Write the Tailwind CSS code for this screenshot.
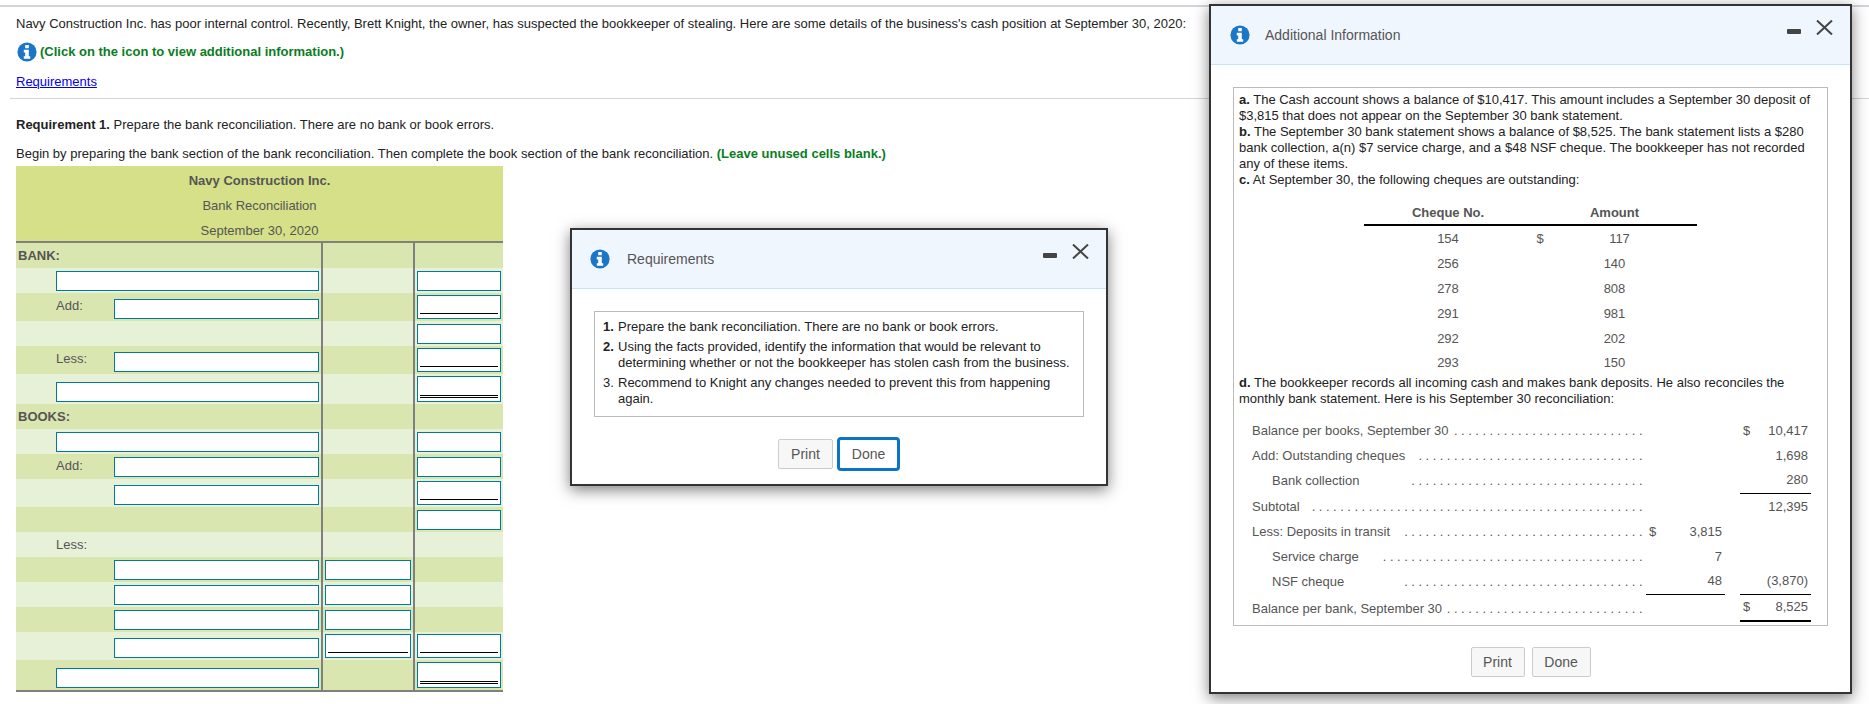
<!DOCTYPE html>
<html lang="en">
<head>
    <meta charset="UTF-8">
    <title>Bank Reconciliation</title>
    <script src="https://cdn.jsdelivr.net/npm/@tailwindcss/browser@4"></script>
</head>
<body class="relative h-[704px] overflow-hidden bg-white font-['Liberation_Sans',Arial,sans-serif] text-[13px] text-[#222]">

    <!-- Question -->
    <div class="border-t-2 border-[#d3d3dc] mt-[5px]"></div>
    <p class="pl-4 pt-[9px] h-[32px] leading-[16px]">Navy Construction Inc. has poor internal control. Recently, Brett Knight, the owner, has suspected the bookkeeper of stealing. Here are some details of the business's cash position at September 30, 2020:</p>
    <div class="pl-[17px] flex items-center h-[26px] gap-[3px]">
        <svg class="w-[20px] h-[20px]" viewBox="0 0 20 20"><circle cx="10" cy="10" r="9.6" fill="#1976c8"/><path fill="#fff" d="M8.2 3h3.6v3.2H8.2zM6.8 7.8h5v6.4h1.4v2.6H6.8v-2.6h1.4v-3.8H6.8z"/></svg>
        <span class="font-bold text-[#0a7d1e]">(Click on the icon to view additional information.)</span>
    </div>
    <div class="pl-4 pt-[7px] h-[33px]"><a href="#" class="text-[#0000ee] underline">Requirements</a></div>
    <div class="ml-[10px] border-t border-[#d3d3dc]"></div>
    <p class="pl-4 pt-[18px] h-[43px] leading-[16px]"><b>Requirement 1.</b> Prepare the bank reconciliation. There are no bank or book errors.</p>
    <p class="pl-4 pt-[4px] h-[24px] leading-[16px]">Begin by preparing the bank section of the bank reconciliation. Then complete the book section of the bank reconciliation. <b class="text-[#0a7d1e]">(Leave unused cells blank.)</b></p>

    <!-- Worksheet -->
    <div class="ml-4 w-[487px] text-[#555]">
        <div class="bg-[#d5e088] h-[75px] text-center flex flex-col pt-[2px] border-b-0">
            <div class="h-[25px] leading-[25px] font-bold">Navy Construction Inc.</div>
            <div class="h-[25px] leading-[25px]">Bank Reconciliation</div>
            <div class="h-[25px] leading-[25px]">September 30, 2020</div>
        </div>
        <div class="border-t-2 border-b-2 border-[#808080]">
            <div class="flex h-[25px] bg-[#dae6b0]">
                <div class="w-[305px] pl-[2px] flex items-center font-bold">BANK:</div>
                <div class="w-[94px] border-x-2 border-[#808080]"></div>
                <div class="flex-1"></div>
            </div>
            <div class="flex h-[25px] bg-[#e7f1d8]">
                <div class="w-[305px] pl-10 pr-[2px] flex items-end pb-[2px]"><input class="w-full h-[20px] bg-white border border-[#007a9c]"></div>
                <div class="w-[94px] border-x-2 border-[#808080]"></div>
                <div class="flex-1 px-[2px] flex items-end pb-[2px]"><input class="w-full h-[20px] bg-white border border-[#007a9c]"></div>
            </div>
            <div class="flex h-[28px] bg-[#dae6b0]">
                <div class="w-[305px] pl-10 pr-[2px] flex items-end pb-[2px]"><span class="w-[58px] self-center">Add:</span><input class="flex-1 h-[20px] bg-white border border-[#007a9c]"></div>
                <div class="w-[94px] border-x-2 border-[#808080]"></div>
                <div class="flex-1 px-[2px] flex items-end pb-[2px]"><div class="w-full h-[24px] bg-white border border-[#007a9c] px-[2px]"><div class="h-[18px] border-b border-black"></div></div></div>
            </div>
            <div class="flex h-[25px] bg-[#e7f1d8]">
                <div class="w-[305px]"></div>
                <div class="w-[94px] border-x-2 border-[#808080]"></div>
                <div class="flex-1 px-[2px] flex items-end pb-[2px]"><input class="w-full h-[20px] bg-white border border-[#007a9c]"></div>
            </div>
            <div class="flex h-[28px] bg-[#dae6b0]">
                <div class="w-[305px] pl-10 pr-[2px] flex items-end pb-[2px]"><span class="w-[58px] self-center">Less:</span><input class="flex-1 h-[20px] bg-white border border-[#007a9c]"></div>
                <div class="w-[94px] border-x-2 border-[#808080]"></div>
                <div class="flex-1 px-[2px] flex items-end pb-[2px]"><div class="w-full h-[24px] bg-white border border-[#007a9c] px-[2px]"><div class="h-[18px] border-b border-black"></div></div></div>
            </div>
            <div class="flex h-[30px] bg-[#e7f1d8]">
                <div class="w-[305px] pl-10 pr-[2px] flex items-end pb-[2px]"><input class="w-full h-[20px] bg-white border border-[#007a9c]"></div>
                <div class="w-[94px] border-x-2 border-[#808080]"></div>
                <div class="flex-1 px-[2px] flex items-end pb-[2px]"><div class="w-full h-[26px] bg-white border border-[#007a9c] px-[2px]"><div class="h-[21px] border-b-[3px] border-double border-black"></div></div></div>
            </div>
            <div class="flex h-[25px] bg-[#dae6b0]">
                <div class="w-[305px] pl-[2px] flex items-center font-bold">BOOKS:</div>
                <div class="w-[94px] border-x-2 border-[#808080]"></div>
                <div class="flex-1"></div>
            </div>
            <div class="flex h-[25px] bg-[#e7f1d8]">
                <div class="w-[305px] pl-10 pr-[2px] flex items-end pb-[2px]"><input class="w-full h-[20px] bg-white border border-[#007a9c]"></div>
                <div class="w-[94px] border-x-2 border-[#808080]"></div>
                <div class="flex-1 px-[2px] flex items-end pb-[2px]"><input class="w-full h-[20px] bg-white border border-[#007a9c]"></div>
            </div>
            <div class="flex h-[25px] bg-[#dae6b0]">
                <div class="w-[305px] pl-10 pr-[2px] flex items-end pb-[2px]"><span class="w-[58px] self-center">Add:</span><input class="flex-1 h-[20px] bg-white border border-[#007a9c]"></div>
                <div class="w-[94px] border-x-2 border-[#808080]"></div>
                <div class="flex-1 px-[2px] flex items-end pb-[2px]"><input class="w-full h-[20px] bg-white border border-[#007a9c]"></div>
            </div>
            <div class="flex h-[28px] bg-[#e7f1d8]">
                <div class="w-[305px] pl-[98px] pr-[2px] flex items-end pb-[2px]"><input class="w-full h-[20px] bg-white border border-[#007a9c]"></div>
                <div class="w-[94px] border-x-2 border-[#808080]"></div>
                <div class="flex-1 px-[2px] flex items-end pb-[2px]"><div class="w-full h-[24px] bg-white border border-[#007a9c] px-[2px]"><div class="h-[18px] border-b border-black"></div></div></div>
            </div>
            <div class="flex h-[25px] bg-[#dae6b0]">
                <div class="w-[305px]"></div>
                <div class="w-[94px] border-x-2 border-[#808080]"></div>
                <div class="flex-1 px-[2px] flex items-end pb-[2px]"><input class="w-full h-[20px] bg-white border border-[#007a9c]"></div>
            </div>
            <div class="flex h-[25px] bg-[#e7f1d8]">
                <div class="w-[305px] pl-10 flex items-center">Less:</div>
                <div class="w-[94px] border-x-2 border-[#808080]"></div>
                <div class="flex-1"></div>
            </div>
            <div class="flex h-[25px] bg-[#dae6b0]">
                <div class="w-[305px] pl-[98px] pr-[2px] flex items-end pb-[2px]"><input class="w-full h-[20px] bg-white border border-[#007a9c]"></div>
                <div class="w-[94px] border-x-2 border-[#808080] px-[2px] flex items-end pb-[2px]"><input class="w-full h-[20px] bg-white border border-[#007a9c]"></div>
                <div class="flex-1"></div>
            </div>
            <div class="flex h-[25px] bg-[#e7f1d8]">
                <div class="w-[305px] pl-[98px] pr-[2px] flex items-end pb-[2px]"><input class="w-full h-[20px] bg-white border border-[#007a9c]"></div>
                <div class="w-[94px] border-x-2 border-[#808080] px-[2px] flex items-end pb-[2px]"><input class="w-full h-[20px] bg-white border border-[#007a9c]"></div>
                <div class="flex-1"></div>
            </div>
            <div class="flex h-[25px] bg-[#dae6b0]">
                <div class="w-[305px] pl-[98px] pr-[2px] flex items-end pb-[2px]"><input class="w-full h-[20px] bg-white border border-[#007a9c]"></div>
                <div class="w-[94px] border-x-2 border-[#808080] px-[2px] flex items-end pb-[2px]"><input class="w-full h-[20px] bg-white border border-[#007a9c]"></div>
                <div class="flex-1"></div>
            </div>
            <div class="flex h-[28px] bg-[#e7f1d8]">
                <div class="w-[305px] pl-[98px] pr-[2px] flex items-end pb-[2px]"><input class="w-full h-[20px] bg-white border border-[#007a9c]"></div>
                <div class="w-[94px] border-x-2 border-[#808080] px-[2px] flex items-end pb-[2px]"><div class="w-full h-[24px] bg-white border border-[#007a9c] px-[2px]"><div class="h-[18px] border-b border-black"></div></div></div>
                <div class="flex-1 px-[2px] flex items-end pb-[2px]"><div class="w-full h-[24px] bg-white border border-[#007a9c] px-[2px]"><div class="h-[18px] border-b border-black"></div></div></div>
            </div>
            <div class="flex h-[30px] bg-[#dae6b0]">
                <div class="w-[305px] pl-10 pr-[2px] flex items-end pb-[2px]"><input class="w-full h-[20px] bg-white border border-[#007a9c]"></div>
                <div class="w-[94px] border-x-2 border-[#808080]"></div>
                <div class="flex-1 px-[2px] flex items-end pb-[2px]"><div class="w-full h-[26px] bg-white border border-[#007a9c] px-[2px]"><div class="h-[21px] border-b-[3px] border-double border-black"></div></div></div>
            </div>
        </div>
    </div>

    <!-- Requirements window -->
    <div class="absolute left-[570px] top-[228px] w-[538px] h-[258px] bg-white border-2 border-[#333] shadow-[0_4px_14px_rgba(0,0,0,0.5)]">
        <div class="relative h-[59px] bg-[#f0f6fe] border-b border-[#c8e2f6] flex items-center pl-[18px] gap-[17px] text-[14px] text-[#555]">
            <svg class="w-[20px] h-[20px]" viewBox="0 0 20 20"><circle cx="10" cy="10" r="9.6" fill="#1976c8"/><path fill="#fff" d="M8.2 3h3.6v3.2H8.2zM6.8 7.8h5v6.4h1.4v2.6H6.8v-2.6h1.4v-3.8H6.8z"/></svg>
            <span>Requirements</span>
            <div class="absolute left-[471px] top-[23px] w-[14px] h-[5px] rounded-[1px] bg-[#444]"></div>
            <svg class="absolute left-[500px] top-[14px] w-[17px] h-[15px]" viewBox="0 0 17 15"><path d="M1 .5l15 14M16 .5l-15 14" stroke="#444" stroke-width="2" fill="none"/></svg>
        </div>
        <div class="mx-[22px] mt-[22px] h-[106px] border border-[#bbb] pl-[8px] pt-[7px] text-[#222] leading-[16px]">
            <div class="flex mb-[4px]"><b class="w-[15px]">1.</b><span>Prepare the bank reconciliation. There are no bank or book errors.</span></div>
            <div class="flex mb-[4px]"><b class="w-[15px] shrink-0">2.</b><span>Using the facts provided, identify the information that would be relevant to determining whether or not the bookkeeper has stolen cash from the business.</span></div>
            <div class="flex"><span class="w-[15px] shrink-0">3.</span><span>Recommend to Knight any changes needed to prevent this from happening again.</span></div>
        </div>
        <div class="flex justify-center gap-[4px] mt-[20px] items-center text-[14px] text-[#555]">
            <button class="w-[55px] h-[30px] bg-[#f7f7f7] border border-[#ccc] rounded-[2px]">Print</button>
            <button class="w-[63px] h-[34px] bg-white border-[3px] border-[#0b74c4] rounded-[4px]">Done</button>
        </div>
    </div>

    <!-- Additional Information window -->
    <div class="absolute left-[1209px] top-[4px] w-[643px] h-[690px] bg-white border-2 border-[#333] shadow-[0_4px_14px_rgba(0,0,0,0.5)]">
        <div class="relative h-[59px] bg-[#f0f6fe] border-b border-[#c8e2f6] flex items-center pl-[19px] gap-[15px] text-[14px] text-[#555]">
            <svg class="w-[20px] h-[20px]" viewBox="0 0 20 20"><circle cx="10" cy="10" r="9.6" fill="#1976c8"/><path fill="#fff" d="M8.2 3h3.6v3.2H8.2zM6.8 7.8h5v6.4h1.4v2.6H6.8v-2.6h1.4v-3.8H6.8z"/></svg>
            <span>Additional Information</span>
            <div class="absolute left-[576px] top-[23px] w-[14px] h-[5px] rounded-[1px] bg-[#444]"></div>
            <svg class="absolute left-[605px] top-[14px] w-[17px] h-[15px]" viewBox="0 0 17 15"><path d="M1 .5l15 14M16 .5l-15 14" stroke="#444" stroke-width="2" fill="none"/></svg>
        </div>
        <div class="mx-[22px] mt-[22px] h-[539px] border border-[#bbb] px-[5px] pt-[4px] text-[#222] leading-[16px]">
            <p><b>a.</b> The Cash account shows a balance of $10,417. This amount includes a September 30 deposit of $3,815 that does not appear on the September 30 bank statement.</p>
            <p><b>b.</b> The September 30 bank statement shows a balance of $8,525. The bank statement lists a $280 bank collection, a(n) $7 service charge, and a $48 NSF cheque. The bookkeeper has not recorded any of these items.</p>
            <p><b>c.</b> At September 30, the following cheques are outstanding:</p>

            <div class="ml-[125px] mt-[14px] w-[333px] text-[#555] text-center">
                <div class="flex h-[24px] border-b-2 border-black font-bold items-center">
                    <span class="w-[168px]">Cheque No.</span><span class="w-[165px]">Amount</span>
                </div>
                <div class="flex h-[25px] items-center"><span class="w-[168px]">154</span><span class="w-[16px]">$</span><span class="w-[149px] pr-[6px]">117</span></div>
                <div class="flex h-[25px] items-center"><span class="w-[168px]">256</span><span class="w-[165px]">140</span></div>
                <div class="flex h-[25px] items-center"><span class="w-[168px]">278</span><span class="w-[165px]">808</span></div>
                <div class="flex h-[25px] items-center"><span class="w-[168px]">291</span><span class="w-[165px]">981</span></div>
                <div class="flex h-[25px] items-center"><span class="w-[168px]">292</span><span class="w-[165px]">202</span></div>
                <div class="flex h-[24px] items-center"><span class="w-[168px]">293</span><span class="w-[165px]">150</span></div>
            </div>

            <p><b>d.</b> The bookkeeper records all incoming cash and makes bank deposits. He also reconciles the monthly bank statement. Here is his September 30 reconciliation:</p>

            <div class="mt-[11px] ml-[13px] text-[#555]">
                <div class="flex h-[25px] items-center">
                    <div class="w-[394px] flex whitespace-nowrap"><span class="shrink-0">Balance per books, September 30</span><span class="flex-1 tracking-[3.5px] text-right">...........................</span></div>
                    <div class="w-[94px]"></div><div class="w-[71px] flex justify-between px-[3px]"><span>$</span><span>10,417</span></div>
                </div>
                <div class="flex h-[25px] items-center">
                    <div class="w-[394px] flex whitespace-nowrap"><span class="shrink-0">Add: Outstanding cheques</span><span class="flex-1 tracking-[3.5px] text-right">................................</span></div>
                    <div class="w-[94px]"></div><div class="w-[71px] text-right px-[3px]">1,698</div>
                </div>
                <div class="flex h-[26px] items-center">
                    <div class="w-[394px] flex whitespace-nowrap pl-5"><span class="shrink-0">Bank collection</span><span class="flex-1 tracking-[3.5px] text-right">.................................</span></div>
                    <div class="w-[94px]"></div><div class="w-[71px] h-full border-b border-black text-right px-[3px] leading-[24px]">280</div>
                </div>
                <div class="flex h-[25px] items-center">
                    <div class="w-[394px] flex whitespace-nowrap"><span class="shrink-0">Subtotal</span><span class="flex-1 tracking-[3.5px] text-right">...............................................</span></div>
                    <div class="w-[94px]"></div><div class="w-[71px] text-right px-[3px]">12,395</div>
                </div>
                <div class="flex h-[25px] items-center">
                    <div class="w-[394px] flex whitespace-nowrap"><span class="shrink-0">Less: Deposits in transit</span><span class="flex-1 tracking-[3.5px] text-right">..................................</span></div>
                    <div class="w-[79px] flex justify-between px-[3px]"><span>$</span><span>3,815</span></div><div class="w-[15px]"></div><div class="w-[71px]"></div>
                </div>
                <div class="flex h-[25px] items-center">
                    <div class="w-[394px] flex whitespace-nowrap pl-5"><span class="shrink-0">Service charge</span><span class="flex-1 tracking-[3.5px] text-right">.....................................</span></div>
                    <div class="w-[79px] text-right px-[3px]">7</div><div class="w-[15px]"></div><div class="w-[71px]"></div>
                </div>
                <div class="flex h-[26px] items-center">
                    <div class="w-[394px] flex whitespace-nowrap pl-5"><span class="shrink-0">NSF cheque</span><span class="flex-1 tracking-[3.5px] text-right">..................................</span></div>
                    <div class="w-[79px] h-full border-b border-black text-right px-[3px] leading-[24px]">48</div><div class="w-[15px]"></div><div class="w-[71px] h-full border-b border-black text-right px-[3px] leading-[24px]">(3,870)</div>
                </div>
                <div class="flex h-[27px] items-center">
                    <div class="w-[394px] flex whitespace-nowrap"><span class="shrink-0">Balance per bank, September 30</span><span class="flex-1 tracking-[3.5px] text-right">............................</span></div>
                    <div class="w-[94px]"></div><div class="w-[71px] h-full border-b-2 border-black flex justify-between px-[3px] leading-[24px]"><span>$</span><span>8,525</span></div>
                </div>
            </div>
        </div>
        <div class="flex justify-center gap-[7px] mt-[21px] text-[14px] text-[#555]">
            <button class="w-[54px] h-[30px] bg-[#f7f7f7] border border-[#ccc] rounded-[2px]">Print</button>
            <button class="w-[59px] h-[30px] bg-[#f7f7f7] border border-[#ccc] rounded-[2px]">Done</button>
        </div>
    </div>

</body>
</html>
